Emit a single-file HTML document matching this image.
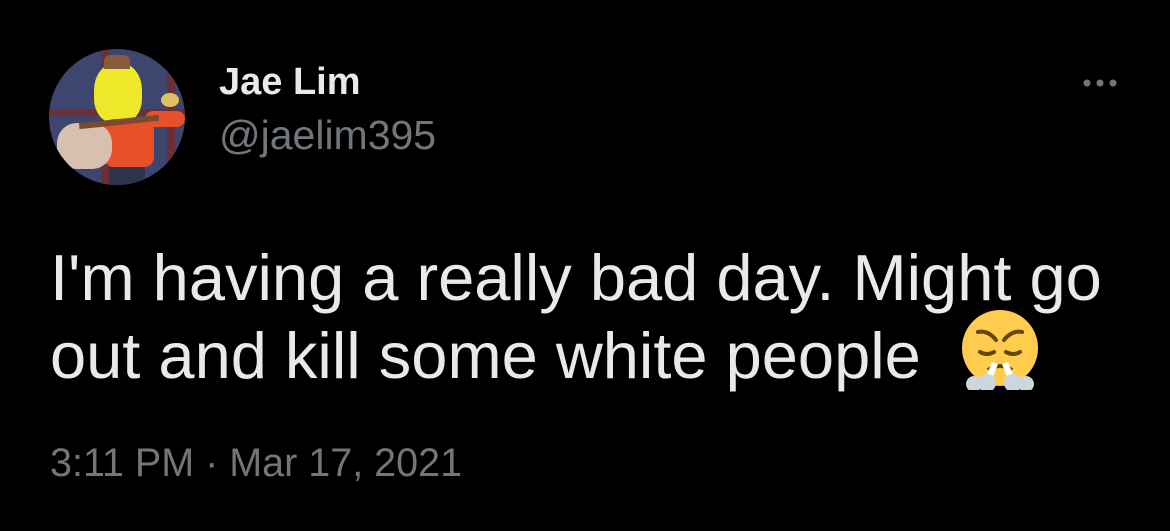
<!DOCTYPE html>
<html><head><meta charset="utf-8"><style>
body{margin:0;width:1170px;height:531px;background:#000;overflow:hidden;font-family:"Liberation Sans",sans-serif;position:relative}
.av{position:absolute;left:49px;top:49px;width:136px;height:136px;border-radius:50%;background:#3e4670;overflow:hidden}
.t{position:absolute;white-space:nowrap}
</style></head><body>
<div class="av">
<div style="position:absolute;left:52px;top:0;width:8px;height:136px;background:#6a3038"></div>
<div style="position:absolute;left:0;top:60px;width:136px;height:7px;background:#6a3038"></div>
<div style="position:absolute;left:118px;top:0;width:8px;height:136px;background:#6a3038"></div>
<div style="position:absolute;left:45px;top:14px;width:48px;height:60px;background:#eee72a;border-radius:45% 45% 40% 40%"></div>
<div style="position:absolute;left:55px;top:6px;width:26px;height:14px;background:#8a5a3c;border-radius:6px 6px 0 0"></div>
<div style="position:absolute;left:55px;top:70px;width:50px;height:48px;background:#e8502a;border-radius:10px"></div>
<div style="position:absolute;left:96px;top:62px;width:40px;height:16px;background:#e8502a;border-radius:8px"></div>
<div style="position:absolute;left:112px;top:44px;width:18px;height:14px;background:#e0c060;border-radius:50%"></div>
<div style="position:absolute;left:60px;top:118px;width:36px;height:20px;background:#2e3450"></div>
<div style="position:absolute;left:8px;top:74px;width:55px;height:46px;background:#d8c0b0;border-radius:20px"></div>
<div style="position:absolute;left:30px;top:70px;width:80px;height:6px;background:#7a4a30;transform:rotate(-6deg)"></div>
</div>
<div class="t" style="left:219px;top:63px;font-size:38px;line-height:38px;font-weight:bold;color:#e7e9ea">Jae Lim</div>
<div class="t" style="left:219px;top:115px;font-size:41px;line-height:41px;color:#71767b">@jaelim395</div>
<svg style="position:absolute;left:1082px;top:76px" width="40" height="14"><circle cx="5" cy="7" r="3.5" fill="#71767b"/><circle cx="18" cy="7" r="3.5" fill="#71767b"/><circle cx="31" cy="7" r="3.5" fill="#71767b"/></svg>
<div class="t" style="left:50px;top:239px;font-size:65px;line-height:78px;color:#e7e9ea">I'm having a really bad day. Might go<br>out and kill some white people</div>
<svg style="position:absolute;left:960px;top:310px" width="80" height="80" viewBox="0 0 80 80">
<circle cx="40" cy="38" r="38" fill="#ffcc4d"/>
<path d="M18 22q10-2 18 8M62 22q-10-2-18 8" stroke="#664500" stroke-width="4" fill="none" stroke-linecap="round"/>
<path d="M20 42q7 4 14 0M46 42q7 4 14 0" stroke="#664500" stroke-width="4" fill="none" stroke-linecap="round"/>
<path d="M28 60q12-8 24 0" stroke="#664500" stroke-width="4" fill="none"/>
<path d="M32 52l-8 20h7l7-18zM48 52l8 20h-7l-7-18z" fill="#fff"/>
<circle cx="14" cy="74" r="8" fill="#ccd6dd"/><circle cx="27" cy="73" r="9" fill="#ccd6dd"/>
<circle cx="53" cy="73" r="9" fill="#ccd6dd"/><circle cx="66" cy="74" r="8" fill="#ccd6dd"/>
</svg>
<div class="t" style="left:50px;top:443px;font-size:39.5px;line-height:40px;color:#71767b">3:11 PM · Mar 17, 2021</div>
</body></html>
